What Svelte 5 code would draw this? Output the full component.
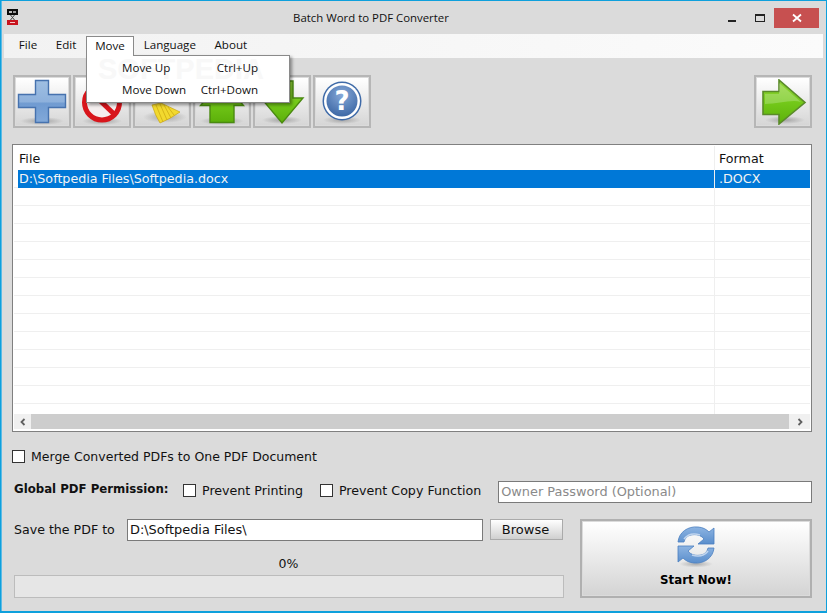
<script>
  const rows = Array.from({ length: 12 }, (_, i) => i)
  const menus = ['File', 'Edit', 'Move', 'Language', 'About']
</script>

<div class="window">
  <header class="titlebar">
    <svg class="app-icon" width="12" height="17" viewBox="0 0 12 17">
      <rect x="0" y="0" width="11" height="6" fill="#0c0c0c" />
      <rect x="2" y="2" width="3" height="2" fill="#bbb" />
      <rect x="6" y="2" width="3" height="2" fill="#999" />
      <path d="M3.5 6l4 5M7.5 6l-4 5" stroke="#444" />
      <rect x="0" y="11" width="11" height="5" fill="#c8141e" />
      <rect x="3" y="13" width="5" height="1" fill="#f6c8c8" />
    </svg>
    <span class="title">Batch Word to PDF Converter</span>
    <div class="controls">
      <span class="min"></span>
      <span class="max"></span>
      <span class="close">
        <svg width="10" height="10" viewBox="0 0 10 10"><path d="M1 1.5l8 7M9 1.5l-8 7" stroke="#fff" stroke-width="1.8" /></svg>
      </span>
    </div>
  </header>

  <nav class="menubar">
    {#each menus as m}
      <span class="menu-item" class:open={m === 'Move'}>{m}</span>
    {/each}
  </nav>

  <div class="dropdown">
    <span class="watermark">SOFTPEDIA</span>
    <div class="drop-row"><span>Move Up</span><span>Ctrl+Up</span></div>
    <div class="drop-row"><span>Move Down</span><span>Ctrl+Down</span></div>
  </div>

  <div class="toolbar">
    <div class="tools">
      <button class="tool" type="button" aria-label="Add">
        <svg width="50" height="46" viewBox="0 0 50 46">
          <defs>
            <linearGradient id="blue" x1="0" y1="0" x2="0" y2="1">
              <stop offset="0" stop-color="#9fbfe2" />
              <stop offset="0.5" stop-color="#8eb1dc" />
              <stop offset="0.55" stop-color="#709bd1" />
              <stop offset="1" stop-color="#82a9d9" />
            </linearGradient>
            <radialGradient id="shade">
              <stop offset="0" stop-color="#000" stop-opacity="0.25" />
              <stop offset="1" stop-color="#000" stop-opacity="0" />
            </radialGradient>
            <linearGradient id="green" x1="0" y1="0" x2="0" y2="1">
              <stop offset="0" stop-color="#93d53a" />
              <stop offset="0.5" stop-color="#74c91a" />
              <stop offset="1" stop-color="#5cb00a" />
            </linearGradient>
          </defs>
          <ellipse cx="25" cy="42" rx="22" ry="4" fill="url(#shade)" />
          <path d="M18.5 1.5h13v14h17v13h-17v15h-13v-15h-17v-13h17z" fill="url(#blue)" stroke="#4672ae" stroke-width="1.4" />
        </svg>
      </button>
      <button class="tool" type="button" aria-label="Remove">
        <svg width="50" height="46" viewBox="0 0 50 46">
          <ellipse cx="25" cy="42" rx="20" ry="4" fill="url(#shade)" />
          <circle cx="25" cy="23.5" r="17.5" fill="#f4eeee" stroke="#d8161c" stroke-width="5" />
          <path d="M13 12l24 23" stroke="#d8161c" stroke-width="5" />
        </svg>
      </button>
      <button class="tool" type="button" aria-label="Clear">
        <svg width="50" height="46" viewBox="0 0 50 46">
          <ellipse cx="28" cy="38" rx="22" ry="6" fill="url(#shade)" />
          <path d="M15 26L24 24 43 33Q33 40 23 44 18 36 15 26z" fill="#f2d92e" stroke="#c9a510" stroke-width="0.7" />
          <path d="M19 26l7 17M23 25l7 16M27 26l7 13M31 28l6 8" stroke="#c9a510" stroke-width="0.7" />
        </svg>
      </button>
      <button class="tool" type="button" aria-label="Move up">
        <svg width="50" height="46" viewBox="0 0 50 46">
          <ellipse cx="25" cy="42" rx="22" ry="4" fill="url(#shade)" />
          <path d="M25 1L46.5 26.5H37V43.5H13V26.5H3.5z" fill="url(#green)" stroke="#4a8a10" stroke-width="1.4" />
        </svg>
      </button>
      <button class="tool" type="button" aria-label="Move down">
        <svg width="50" height="46" viewBox="0 0 50 46">
          <ellipse cx="25" cy="41" rx="20" ry="4" fill="url(#shade)" />
          <path d="M14 2H36V19H46L25 44 4 19H14z" fill="url(#green)" stroke="#4a8a10" stroke-width="1.4" />
        </svg>
      </button>
      <button class="tool" type="button" aria-label="Help">
        <svg width="50" height="46" viewBox="0 0 50 46">
          <defs>
            <radialGradient id="ball" cx="0.5" cy="0.3" r="0.8">
              <stop offset="0" stop-color="#86a8d8" />
              <stop offset="1" stop-color="#34609f" />
            </radialGradient>
          </defs>
          <ellipse cx="25" cy="41" rx="19" ry="4" fill="url(#shade)" />
          <circle cx="25" cy="22" r="19.5" fill="#3e6aa8" />
          <circle cx="25" cy="22" r="18" fill="#fff" />
          <circle cx="25" cy="22" r="15.5" fill="url(#ball)" />
          <text x="25" y="31" text-anchor="middle" class="qmark">?</text>
        </svg>
      </button>
    </div>
    <button class="tool" type="button" aria-label="Next">
      <svg width="50" height="46" viewBox="0 0 50 46">
        <ellipse cx="27" cy="41" rx="20" ry="4" fill="url(#shade)" />
        <path d="M5 12.5H21V1L47 23.5 21 45V35.5H5z" fill="url(#green)" stroke="#5a8a2a" stroke-width="1.6" />
        <path d="M7 15H21V4L43 23C34 20 20 25 7 25z" fill="#fff" opacity="0.22" />
      </svg>
    </button>
  </div>

  <section class="table">
    <div class="row head">
      <span class="cell">File</span>
      <span class="cell fmt">Format</span>
    </div>
    <div class="row selected">
      <span class="cell">D:\Softpedia Files\Softpedia.docx</span>
      <span class="cell fmt">.DOCX</span>
    </div>
    {#each rows as r (r)}
      <div class="row"><span class="cell"></span><span class="cell fmt"></span></div>
    {/each}
    <div class="row partial"><span class="cell"></span><span class="cell fmt"></span></div>
    <div class="hscroll">
      <span class="arrow">
        <svg width="8" height="8" viewBox="0 0 8 8"><path d="M5.5 1L2.5 4l3 3" fill="none" stroke="#606060" stroke-width="1.8" /></svg>
      </span>
      <span class="track"></span>
      <span class="arrow right">
        <svg width="8" height="8" viewBox="0 0 8 8"><path d="M2.5 1l3 3-3 3" fill="none" stroke="#606060" stroke-width="1.8" /></svg>
      </span>
    </div>
  </section>

  <label class="merge"><span class="check"></span>Merge Converted PDFs to One PDF Document</label>

  <div class="perm">
    <strong>Global PDF Permission:</strong>
    <label><span class="check"></span>Prevent Printing</label>
    <label><span class="check"></span>Prevent Copy Function</label>
    <span class="input password">Owner Password (Optional)</span>
  </div>

  <div class="bottom">
    <div class="left">
      <div class="save">
        <span class="save-label">Save the PDF to</span>
        <span class="input path">D:\Softpedia Files\</span>
        <button class="browse" type="button">Browse</button>
      </div>
      <div class="percent">0%</div>
      <div class="progress"></div>
    </div>
    <button class="start" type="button">
      <svg width="40" height="42" viewBox="0 0 40 42">
        <defs>
          <linearGradient id="refresh" x1="0" y1="0" x2="0" y2="1">
            <stop offset="0" stop-color="#8db4e2" />
            <stop offset="1" stop-color="#5a8ecc" />
          </linearGradient>
        </defs>
        <ellipse cx="20" cy="38" rx="17" ry="3.5" fill="url(#shade)" />
        <path d="M2 16C3 6 12 0 22 1c5 .5 8 2 11 5l5-4v16H22l6-5c-3-4-8-5-13-4-4 1-6 3-7 7z" fill="url(#refresh)" stroke="#4a7fc0" stroke-width="0.8" />
        <path d="M38 22c-1 10-10 16-20 15-5-.5-8-2-11-5l-5 4V20h16l-6 5c3 4 8 5 13 4 4-1 6-3 7-7z" fill="url(#refresh)" stroke="#4a7fc0" stroke-width="0.8" />
        <path d="M8 13c4-5 10-6 16-4M32 25c-4 5-10 6-16 4" fill="none" stroke="#d6e4f5" stroke-width="1.6" opacity="0.8" />
      </svg>
      <span>Start Now!</span>
    </button>
  </div>
</div>

<style>
  :global(body) {
    margin: 0;
  }

  .window {
    position: relative;
    box-sizing: border-box;
    width: 827px;
    height: 613px;
    overflow: hidden;
    border: 1px solid #0ea0dc;
    border-bottom-width: 2px;
    background: #dbdbdb;
    box-shadow: inset 1px 0 0 #5cbbe6;
    color: #111;
    font-family: 'DejaVu Sans', sans-serif;
    font-size: 12.5px;
  }

  .titlebar {
    position: relative;
    display: flex;
    align-items: center;
    justify-content: center;
    height: 33px;
    font-family: 'Open Sans', sans-serif;
    font-size: 11.4px;
  }

  .app-icon {
    position: absolute;
    left: 6px;
    top: 8px;
  }

  .title {
    margin-left: -85px;
    margin-top: -1px;
  }

  .controls {
    position: absolute;
    right: 7px;
    top: 7px;
    display: flex;
    align-items: center;
  }

  .min {
    width: 8px;
    height: 2px;
    margin: 6px 19px 0 0;
    background: #222;
  }

  .max {
    box-sizing: border-box;
    width: 10px;
    height: 8px;
    margin-right: 9px;
    border: 1px solid #222;
    border-top-width: 2px;
  }

  .close {
    display: flex;
    align-items: center;
    justify-content: center;
    width: 45px;
    height: 20px;
    background: #c75050;
  }

  .menubar {
    display: flex;
    align-items: flex-start;
    height: 24px;
    margin: 0 3px;
    padding: 2px 0 0 5.5px;
    box-sizing: border-box;
    background: linear-gradient(to right, #f2f2f2, #fbfbfb);
    font-family: 'Open Sans', sans-serif;
    font-size: 11.6px;
  }

  .menu-item {
    box-sizing: border-box;
    height: 20px;
    padding: 0 9.3px;
    line-height: 17px;
  }

  .menu-item.open {
    position: relative;
    z-index: 3;
    padding: 0 8.5px;
    border: 1px solid #8a8a8a;
    border-bottom: 0;
    background: #fff;
  }

  .dropdown {
    position: absolute;
    left: 85px;
    top: 54px;
    z-index: 2;
    box-sizing: border-box;
    width: 204px;
    height: 48px;
    padding-top: 1px;
    border: 1px solid #8a8a8a;
    background: #fff;
    box-shadow: 2px 2px 3px rgba(0, 0, 0, 0.4);
    font-family: 'Open Sans', sans-serif;
    font-size: 11.6px;
  }

  .drop-row {
    position: relative;
    display: flex;
    justify-content: space-between;
    height: 22px;
    padding: 0 31px 0 35px;
    line-height: 21px;
  }

  .watermark {
    position: absolute;
    left: 11px;
    top: 0;
    color: #f8f8f8;
    font-family: 'Liberation Sans', sans-serif;
    font-size: 29px;
    font-weight: 700;
    line-height: 26px;
  }

  .toolbar {
    display: flex;
    justify-content: space-between;
    margin: 17px 14px 0 12px;
  }

  .tools {
    display: flex;
    gap: 2px;
  }

  .tool {
    display: flex;
    align-items: center;
    justify-content: center;
    box-sizing: border-box;
    width: 58px;
    height: 53px;
    padding: 1px;
    border: 2px solid #b6b6b6;
    background: linear-gradient(#fff, #d6d6d6) content-box;
    overflow: hidden;
  }

  .tool svg {
    flex-shrink: 0;
  }

  .qmark {
    fill: #fff;
    font-family: 'DejaVu Sans', sans-serif;
    font-size: 26px;
    font-weight: 700;
  }

  .table {
    box-sizing: border-box;
    width: 800px;
    height: 288px;
    margin: 16px 0 0 11px;
    padding: 1px 1px 2px;
    border: 1px solid #808080;
    background: #fff;
    font-size: 12.7px;
  }

  .row {
    display: grid;
    grid-template-columns: 700px 96px;
    height: 18px;
    box-sizing: border-box;
    border-bottom: 1px solid #efefef;
    line-height: 18px;
  }

  .row.head {
    height: 24px;
    border-bottom: 0;
    line-height: 26px;
  }

  .row.partial {
    height: 10px;
    border-bottom: 0;
  }

  .row.selected .cell {
    background: #0078d7;
    color: #f4f4f4;
  }

  .row.selected .cell:first-child {
    margin-left: 4px;
    padding-left: 1px;
  }

  .cell {
    padding-left: 5px;
    white-space: nowrap;
  }

  .fmt {
    border-left: 1px solid #efefef;
    padding-left: 4px;
  }

  .hscroll {
    display: flex;
    height: 15px;
    background: #fff;
  }

  .arrow {
    display: flex;
    align-items: center;
    justify-content: center;
    width: 17px;
    background: #f0f0f0;
  }

  .arrow.right {
    width: 21px;
  }

  .track {
    flex: 1;
    background: #cdcdcd;
  }

  .merge {
    display: flex;
    align-items: center;
    height: 14px;
    margin: 17px 0 0 11px;
  }

  .check {
    flex-shrink: 0;
    box-sizing: border-box;
    width: 13px;
    height: 13px;
    margin-right: 6px;
    border: 1px solid #333;
    background: #fff;
  }

  .perm {
    display: flex;
    align-items: center;
    height: 22px;
    margin: 18px 14px 0 13px;
  }

  .perm strong {
    flex-shrink: 0;
    width: 169px;
    margin-top: -6px;
    font-size: 11.75px;
    white-space: nowrap;
  }

  .perm label {
    display: flex;
    align-items: center;
    margin: -3px 17px 0 0;
    font-size: 12.65px;
    white-space: nowrap;
  }

  .input {
    box-sizing: border-box;
    height: 22px;
    padding-left: 2px;
    border: 1px solid #7a7a7a;
    background: #fff;
    font-size: 12.9px;
    line-height: 19px;
    white-space: nowrap;
  }

  .password {
    flex: 1;
    color: #8a8a8a;
  }

  .bottom {
    display: flex;
    align-items: flex-start;
    margin: 16px 14px 0 13px;
  }

  .left {
    width: 550px;
    margin-right: 16px;
  }

  .save {
    display: flex;
    align-items: center;
  }

  .save-label {
    width: 113px;
    margin-top: -2px;
    font-size: 12.6px;
  }

  .path {
    width: 356px;
    margin-right: 7px;
  }

  .browse {
    align-self: flex-start;
    box-sizing: border-box;
    width: 73px;
    height: 21px;
    padding: 1px 3px 1px 1px;
    border: 1px solid #aaa;
    background: linear-gradient(#fff, #cfcfcf) padding-box;
    color: #111;
    font: inherit;
    font-size: 13px;
  }

  .percent {
    margin-top: 15px;
    padding-right: 1px;
    text-align: center;
    line-height: 16px;
  }

  .progress {
    box-sizing: border-box;
    height: 23px;
    margin-top: 3px;
    border: 1px solid #bcbcbc;
    background: #e6e6e6;
  }

  .start {
    display: flex;
    flex-direction: column;
    align-items: center;
    box-sizing: border-box;
    width: 232px;
    height: 79px;
    padding: 1px;
    border: 2px solid #b0b0b0;
    background: linear-gradient(#fff, #d4d4d4) content-box;
    color: #000;
    font-family: 'DejaVu Sans', sans-serif;
    font-size: 11.8px;
    font-weight: 700;
  }

  .start svg {
    flex-shrink: 0;
    margin-top: 4px;
  }

  .start span {
    margin-top: 5px;
  }
</style>
